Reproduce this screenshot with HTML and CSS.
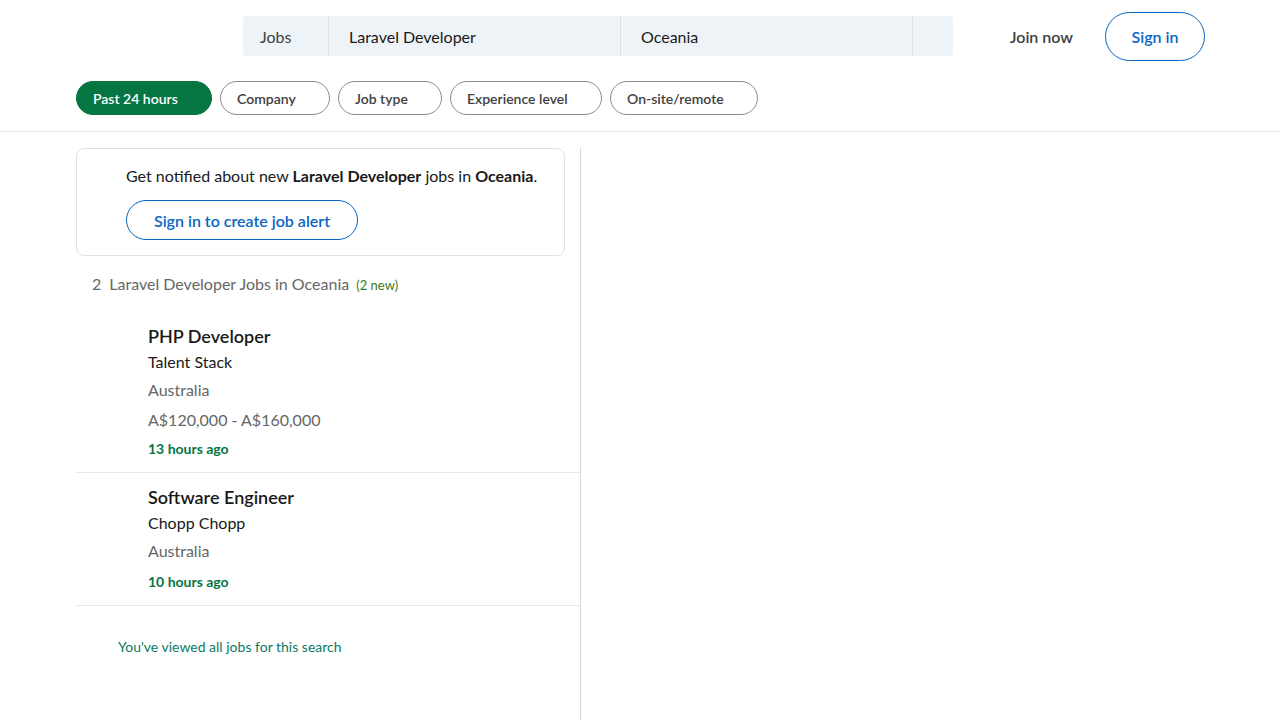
FILE: index.html
```html
<!DOCTYPE html>
<html lang="en">
<head>
<meta charset="utf-8">
<title>Laravel Developer Jobs in Oceania</title>
<link rel="stylesheet" href="styles.css">
</head>
<body>
<header class="header">
  <div class="topbar">
    <div class="search">
      <div class="seg seg-jobs">Jobs</div>
      <div class="seg seg-kw">Laravel Developer</div>
      <div class="seg seg-loc">Oceania</div>
      <div class="seg seg-btn"></div>
    </div>
    <div class="auth">
      <a class="join">Join now</a>
      <a class="signin">Sign in</a>
    </div>
  </div>
  <div class="filters">
    <span class="pill pill-active">Past 24 hours</span>
    <span class="pill pill-company">Company</span>
    <span class="pill pill-type">Job type</span>
    <span class="pill pill-exp">Experience level</span>
    <span class="pill pill-remote">On-site/remote</span>
  </div>
</header>
<main class="main">
  <section class="list">
    <div class="alert">
      <p class="alert-text">Get notified about new <b>Laravel Developer</b> jobs in <b>Oceania</b>.</p>
      <a class="alert-btn">Sign in to create job alert</a>
    </div>
    <h1 class="count"><span class="num">2</span>Laravel Developer Jobs in Oceania <span class="new">(2 new)</span></h1>
    <ul class="jobs">
      <li class="job">
        <h3 class="job-title">PHP Developer</h3>
        <h4 class="job-company">Talent Stack</h4>
        <div class="job-loc">Australia</div>
        <div class="job-salary">A$120,000 - A$160,000</div>
        <time class="job-time">13 hours ago</time>
      </li>
      <li class="job">
        <h3 class="job-title">Software Engineer</h3>
        <h4 class="job-company">Chopp Chopp</h4>
        <div class="job-loc">Australia</div>
        <time class="job-time">10 hours ago</time>
      </li>
    </ul>
    <p class="viewed">You've viewed all jobs for this search</p>
  </section>
  <section class="detail"></section>
</main>
</body>
</html>
```
FILE: styles.css
```css
* { box-sizing: border-box; }
html, body { margin: 0; padding: 0; background: #fff; }
body {
  font-family: "Lato", "Noto Sans", "Liberation Sans", sans-serif;
  color: #191919;
  width: 1280px;
  height: 720px;
  overflow: hidden;
}
a { text-decoration: none; cursor: pointer; }

.header { border-bottom: 1px solid #e8e8e8; }
.topbar {
  display: flex;
  align-items: center;
  height: 72px;
  padding: 0 75px 0 243px;
}
.search {
  display: flex;
  width: 710px;
  height: 40px;
  background: #eef3f8;
  border-radius: 4px;
  font-size: 16px;
  color: #191919;
}
.seg {
  display: flex;
  align-items: center;
  border-right: 1px solid #dce0e4;
}
.seg-jobs { width: 86px; padding-left: 17px; color: #404040; }
.seg-kw { width: 292px; padding-left: 20px; }
.seg-loc { width: 292px; padding-left: 20px; }
.seg-btn { flex: 1; border-right: 0; }
.auth {
  margin-left: auto;
  display: flex;
  align-items: center;
  gap: 24px;
}
.join {
  color: #404040;
  font-size: 16px;
  font-weight: 600;
  padding: 0 8px;
}
.signin {
  display: flex;
  align-items: center;
  justify-content: center;
  width: 100px;
  height: 49px;
  border: 1px solid #0a66c2;
  border-radius: 25px;
  color: #0a66c2;
  font-size: 16px;
  font-weight: 600;
}

.filters {
  display: flex;
  gap: 8px;
  padding: 9px 0 16px 76px;
}
.pill {
  display: flex;
  align-items: center;
  height: 34px;
  padding: 0 16px;
  border: 1px solid #8c8c8c;
  border-radius: 17px;
  font-size: 14px;
  font-weight: 600;
  color: #404040;
}
.pill-active {
  background: #057642;
  border-color: #057642;
  color: #fff;
  width: 136px;
}
.pill-company { width: 110px; }
.pill-type { width: 104px; }
.pill-exp { width: 152px; }
.pill-remote { width: 148px; }

.main { display: flex; padding-top: 16px; height: 589px; }
.list { width: 504px; margin-left: 76px; }
.detail { flex: 1; border-left: 1px solid #d9d9d9; }

.alert {
  width: 489px;
  border: 1px solid #e0e0e0;
  border-radius: 8px;
  padding: 15px 16px 15px 49px;
}
.alert-text { margin: 0 0 12px; font-size: 16px; line-height: 24px; }
.alert-text b { font-weight: 700; }
.alert-btn {
  display: inline-flex;
  align-items: center;
  justify-content: center;
  width: 232px;
  height: 40px;
  border: 1px solid #0a66c2;
  border-radius: 20px;
  color: #0a66c2;
  font-size: 16px;
  font-weight: 600;
}

.count {
  margin: 16px 0 0;
  padding-left: 16px;
  font-size: 16px;
  font-weight: 400;
  line-height: 24px;
  color: #666;
}
.num { margin-right: 8px; }
.new { font-size: 13px; color: #3b7a1c; margin-left: 3px; }

.jobs { list-style: none; margin: 15px 0 0; padding: 0; }
.job {
  padding: 12px 0 13px 72px;
  border-bottom: 1px solid #e8e8e8;
}
.job-title {
  margin: 0;
  font-size: 18px;
  font-weight: 600;
  line-height: 24px;
  color: #191919;
}
.job-company {
  margin: 2px 0 0;
  font-size: 16px;
  font-weight: 400;
  line-height: 24px;
}
.job-loc, .job-salary {
  font-size: 16px;
  line-height: 24px;
  color: #666;
  margin-top: 4px;
}
.job-salary { margin-top: 6px; }
.job-time {
  display: block;
  margin-top: 7px;
  font-size: 14px;
  font-weight: 700;
  line-height: 20px;
  color: #057642;
}
.job-loc + .job-time { margin-top: 9px; }

.viewed {
  margin: 31px 0 0 42px;
  font-size: 14px;
  line-height: 20px;
  color: #0b7a66;
}
```
